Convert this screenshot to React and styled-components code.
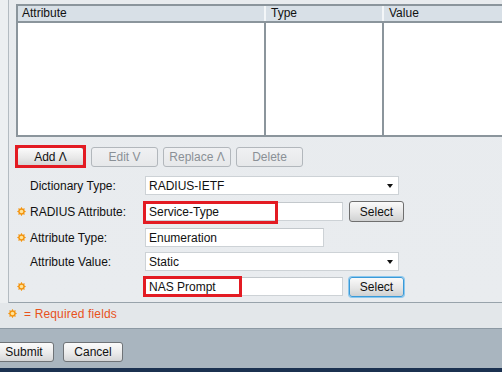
import React from "react";
import styled, { createGlobalStyle, css } from "styled-components";

const GlobalStyle = createGlobalStyle`
  html, body { margin: 0; padding: 0; overflow: hidden; }
  body { font-family: "Liberation Sans", Arial, sans-serif; font-size: 12px; color: #111; }
  * { box-sizing: border-box; }
`;

const Page = styled.div`
  width: 502px;
  height: 372px;
  overflow: hidden;
  background: #eceff1;
  display: flex;
  flex-direction: column;
`;

const Panel = styled.div`
  margin-left: 8px;
  width: 560px;
  height: 303px;
  flex: none;
  background: linear-gradient(180deg, #e8ebee 0%, #e9ecef 100%);
  border-left: 1px solid #b3bbc1;
  border-bottom: 1px solid #98a3ab;
  padding: 4px 0 0 7px;
  overflow: hidden;
`;

const Table = styled.div`
  width: 560px;
  border: 2px solid #8b959c;
  background: #fff;
`;

const HeadRow = styled.div`
  display: grid;
  grid-template-columns: 246px 118px 1fr;
  height: 17px;
  background: #d8e0e7;
  border-bottom: 2px solid #8b959c;
`;

const HeadCell = styled.div`
  line-height: 15px;
  padding-left: ${(p) => (p.$first ? 4 : 5)}px;
  color: #111;
  ${(p) =>
    !p.$first &&
    css`
      border-left: 2px solid #f3f6f8;
    `}
`;

const BodyRow = styled.div`
  display: grid;
  grid-template-columns: 246px 118px 1fr;
  height: 112px;
`;

const BodyCell = styled.div`
  ${(p) =>
    !p.$first &&
    css`
      border-left: 2px solid #8b959c;
    `}
`;

const Toolbar = styled.div`
  display: flex;
  gap: 5px;
  margin-top: 10px;
  margin-left: 1px;
  height: 20px;
`;

const Marked = styled.div`
  position: relative;
  display: flex;
  margin-right: ${(p) => p.$mr || 0}px;
`;

const Annotation = styled.div`
  position: absolute;
  left: ${(p) => p.$l}px;
  top: ${(p) => p.$t}px;
  width: ${(p) => p.$w}px;
  height: ${(p) => p.$h}px;
  border: 3px solid #e31b23;
  pointer-events: none;
`;

const ActionButton = styled.button`
  width: ${(p) => p.$w}px;
  height: 20px;
  padding: 0;
  font: inherit;
  font-size: 12px;
  border-radius: 3px;
  ${(p) =>
    p.disabled
      ? css`
          background: linear-gradient(180deg, #f0f1f3 0%, #e6e8ea 100%);
          border: 1px solid #b2b7bc;
          color: #8a9096;
        `
      : css`
          background: linear-gradient(180deg, #fbfbfb 0%, #e8e8e8 55%, #d2d3d4 100%);
          border: 1px solid #707070;
          color: #111;
        `}
`;

const Form = styled.div`
  margin-top: 6px;
  margin-left: 1px;
  display: flex;
  flex-direction: column;
`;

const Row = styled.div`
  display: flex;
  align-items: center;
  height: ${(p) => p.$h}px;
`;

const StarSlot = styled.div`
  width: 13px;
  flex: none;
  display: flex;
  align-items: center;
`;

const Label = styled.div`
  width: 115px;
  flex: none;
  color: #111;
`;

const TextBox = styled.input`
  width: ${(p) => p.$w}px;
  height: 19px;
  border: 1px solid #cdd2d6;
  border-top-color: #c3c8cc;
  background: #fff;
  font: inherit;
  font-size: 12px;
  color: #111;
  padding: 0 0 0 3px;
  margin: 0;
  outline: none;
`;

const Dropdown = styled.div`
  width: 254px;
  height: 19px;
  border: 1px solid #cdd2d6;
  background: #fff;
  display: flex;
  align-items: center;
  justify-content: space-between;
  padding: 0 5px 0 3px;
`;

const Caret = styled.span`
  width: 0;
  height: 0;
  border-left: 3.5px solid transparent;
  border-right: 3.5px solid transparent;
  border-top: 4px solid #111;
  margin-top: 1px;
`;

const SelectButton = styled.button`
  width: 55px;
  height: ${(p) => (p.$focus ? 20 : 21)}px;
  margin-left: 6px;
  padding: 0;
  font: inherit;
  font-size: 12px;
  color: #111;
  border-radius: 3px;
  background: linear-gradient(180deg, #fafafa 0%, #e6e6e6 55%, #d0d1d2 100%);
  border: 1px solid ${(p) => (p.$focus ? "#3b9ad8" : "#6f6f6f")};
  box-shadow: ${(p) => (p.$focus ? "0 0 0 1px #8cc8ee" : "none")};
`;

const Note = styled.div`
  height: 25px;
  flex: none;
  background: #e3e7ea;
  display: flex;
  align-items: flex-start;
  gap: 7px;
  padding: 4px 0 0 8px;
  color: #e8521c;
  line-height: 14px;
  letter-spacing: 0.15px;
`;

const NoteStar = styled.span`
  display: flex;
  margin-top: 2px;
`;

const Footer = styled.div`
  height: 40px;
  flex: none;
  background: #a9b5bf;
  border-top: 1px solid #8c99a3;
  padding-top: 13px;
  display: flex;
  gap: 9px;
  margin-left: -6px;
`;

const FooterButton = styled.button`
  width: 60px;
  height: 20px;
  padding: 0;
  font: inherit;
  font-size: 12px;
  color: #111;
  border-radius: 3px;
  border: 1px solid #6f7377;
  background: linear-gradient(180deg, #fbfbfb 0%, #ebebeb 55%, #d5d6d7 100%);
`;

const Bottom = styled.div`
  flex: 1;
  background: #1b3150;
`;

const starPoints = Array.from({ length: 16 }, (_, k) => {
  const a = (k * Math.PI) / 8;
  const r = k % 2 === 0 ? 4.6 : 3;
  return `${(4.5 + r * Math.cos(a)).toFixed(2)},${(4.5 + r * Math.sin(a)).toFixed(2)}`;
}).join(" ");

function Star() {
  return (
    <svg width="9" height="9" viewBox="0 0 9 9">
      <polygon points={starPoints} fill="#f39410" />
      <circle cx="4.5" cy="4.5" r="1.8" fill="#ffe49a" />
    </svg>
  );
}

export default function App() {
  return (
    <>
      <GlobalStyle />
      <Page>
        <Panel>
          <Table>
            <HeadRow>
              <HeadCell $first>Attribute</HeadCell>
              <HeadCell>Type</HeadCell>
              <HeadCell>Value</HeadCell>
            </HeadRow>
            <BodyRow>
              <BodyCell $first />
              <BodyCell />
              <BodyCell />
            </BodyRow>
          </Table>

          <Toolbar>
            <Marked $mr={2}>
              <ActionButton $w={67}>Add Λ</ActionButton>
              <Annotation $l={-2} $t={-2} $w={71} $h={23} />
            </Marked>
            <ActionButton $w={67} disabled>Edit V</ActionButton>
            <ActionButton $w={68} disabled>Replace Λ</ActionButton>
            <ActionButton $w={67} disabled>Delete</ActionButton>
          </Toolbar>

          <Form>
            <Row $h={25}>
              <StarSlot />
              <Label>Dictionary Type:</Label>
              <Dropdown>
                <span>RADIUS-IETF</span>
                <Caret />
              </Dropdown>
            </Row>
            <Row $h={27}>
              <StarSlot><Star /></StarSlot>
              <Label>RADIUS Attribute:</Label>
              <Marked>
                <TextBox $w={198} readOnly defaultValue="Service-Type" />
                <Annotation $l={-2} $t={-1} $w={135} $h={23} />
              </Marked>
              <SelectButton>Select</SelectButton>
            </Row>
            <Row $h={25}>
              <StarSlot><Star /></StarSlot>
              <Label>Attribute Type:</Label>
              <TextBox $w={179} readOnly defaultValue="Enumeration" />
            </Row>
            <Row $h={23}>
              <StarSlot />
              <Label>Attribute Value:</Label>
              <Dropdown>
                <span>Static</span>
                <Caret />
              </Dropdown>
            </Row>
            <Row $h={27}>
              <StarSlot><Star /></StarSlot>
              <Label />
              <Marked>
                <TextBox $w={198} readOnly defaultValue="NAS Prompt" />
                <Annotation $l={-2} $t={-1} $w={99} $h={21} />
              </Marked>
              <SelectButton $focus>Select</SelectButton>
            </Row>
          </Form>
        </Panel>

        <Note>
          <NoteStar><Star /></NoteStar>
          <span>= Required fields</span>
        </Note>

        <Footer>
          <FooterButton>Submit</FooterButton>
          <FooterButton>Cancel</FooterButton>
        </Footer>
        <Bottom />
      </Page>
    </>
  );
}
